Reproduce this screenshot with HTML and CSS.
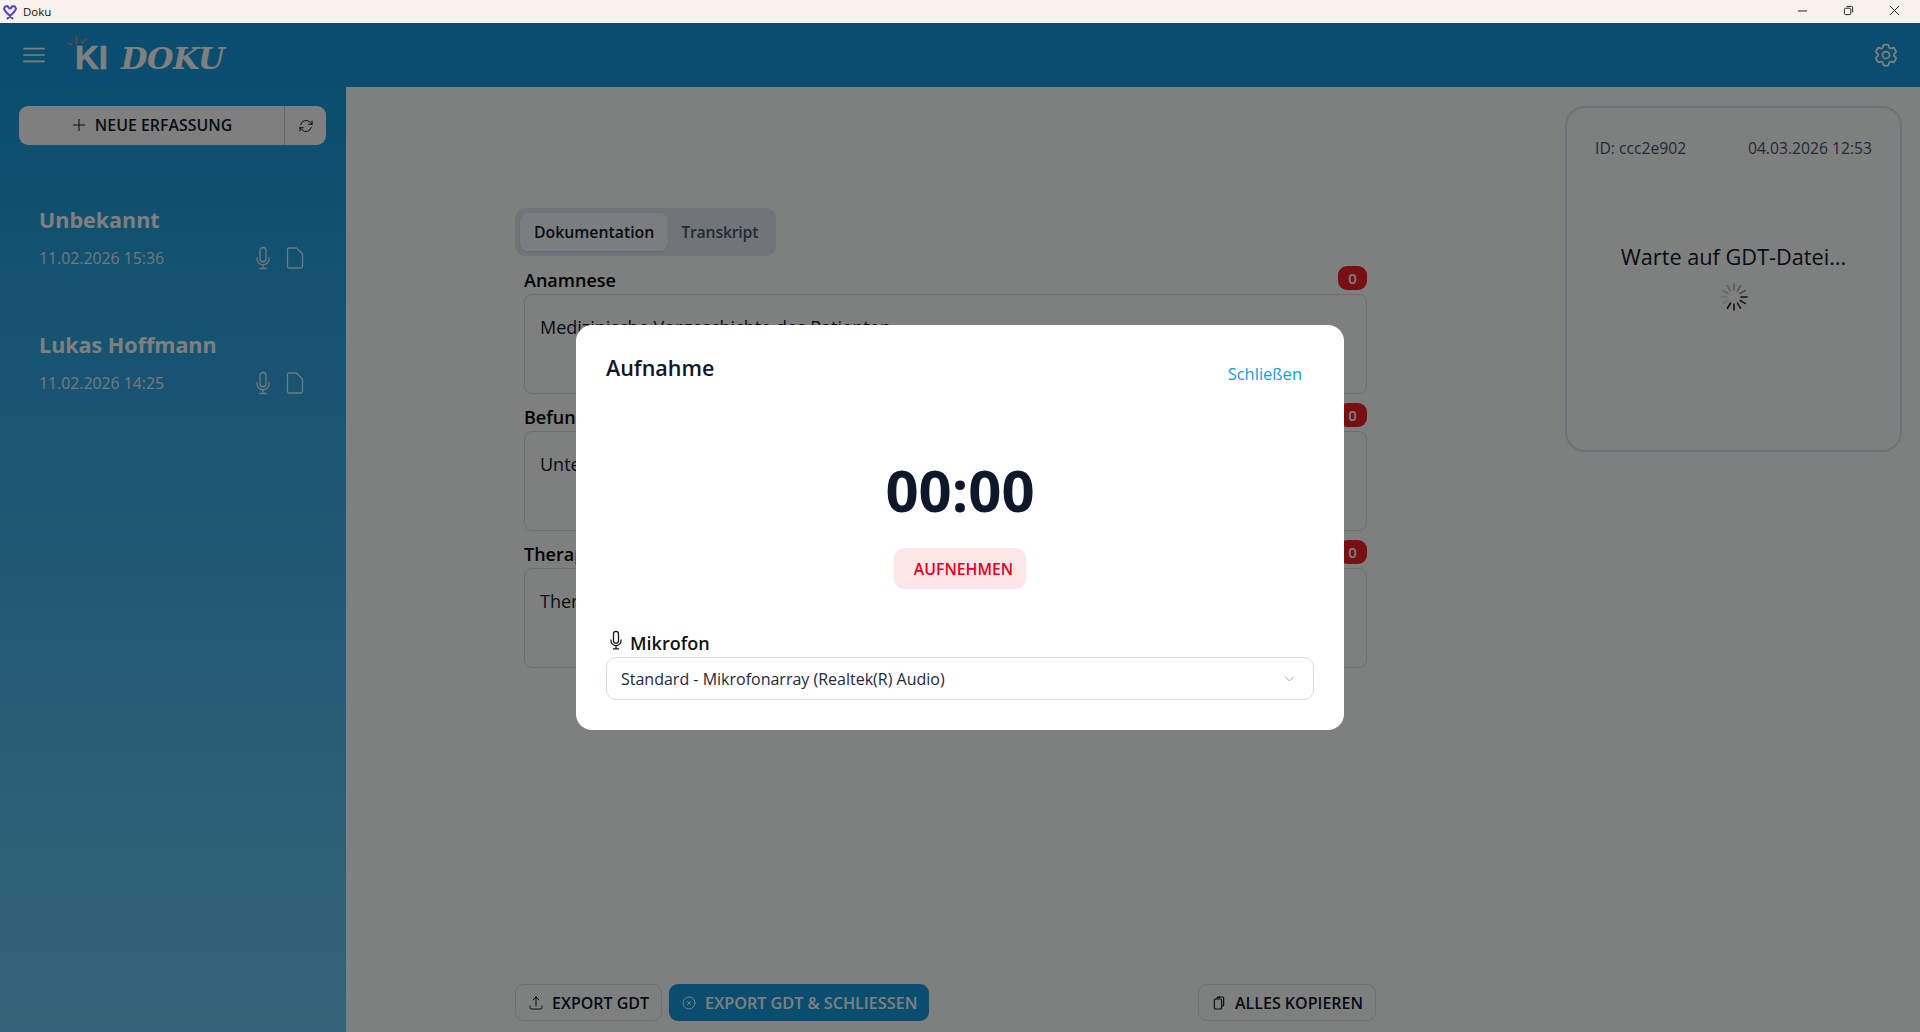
FILE: index.html
```html
<!DOCTYPE html>
<html lang="de">
<head>
  <meta charset="UTF-8">
  <title>Doku</title>
  <link rel="stylesheet" href="styles.css">
</head>
<body>

  <div class="titlebar">
    <svg class="app-icon" viewBox="0 0 14 16" fill="none" stroke="#5b3fd0" stroke-width="2"><path d="M7 5 4.500 2 2 2.500 1 5l2 3 7 7M7 5l2.500-3 2.500.5 1 2.500-2 3-7 7"/></svg>
    <span class="app-name">Doku</span>
    <div class="window-controls">
      <svg viewBox="0 0 12 12" fill="none" stroke="#111" stroke-width="1"><path d="M1 6.500h10"/></svg>
      <svg viewBox="0 0 12 12" fill="none" stroke="#111" stroke-width="1"><rect x="1.500" y="3.500" width="7" height="7" rx="1.500"/><path d="M4 1.500h5a1.500 1.500 0 0 1 1.500 1.500v5"/></svg>
      <svg viewBox="0 0 12 12" fill="none" stroke="#111" stroke-width="1"><path d="m1 1 10 10M11 1 1 11"/></svg>
    </div>
  </div>

  <header class="topbar">
    <svg class="menu-icon" viewBox="0 0 24 24" fill="none" stroke="currentColor" stroke-width="1.800" stroke-linecap="round"><path d="M1 5h22M1 12h22M1 19h22"/></svg>
    <div class="logo">
      <svg class="logo-rays" viewBox="0 0 22 12" fill="none" stroke="#ff7a7a" stroke-width="1.500" stroke-linecap="round"><path d="M9.500 1v7M2 7l3 2M19 3l-4 4"/></svg>
      <span class="logo-ki">KI</span>
      <span class="logo-doku">DOKU</span>
    </div>
    <svg class="gear-icon" viewBox="0 0 24 24" fill="none" stroke="currentColor" stroke-width="1.500"><path d="M9.594 3.940c.09-.542.56-.94 1.110-.94h2.593c.55 0 1.020.398 1.110.94l.213 1.281c.063.374.313.686.645.870.074.040.147.083.22.127.325.196.72.257 1.075.124l1.217-.456a1.125 1.125 0 0 1 1.370.49l1.296 2.247a1.125 1.125 0 0 1-.26 1.431l-1.003.827c-.293.241-.438.613-.43.992a7.723 7.723 0 0 1 0 .255c-.008.378.137.75.43.991l1.004.827c.424.35.534.955.26 1.430l-1.298 2.247a1.125 1.125 0 0 1-1.369.491l-1.217-.456c-.355-.133-.75-.072-1.076.124a6.470 6.470 0 0 1-.22.128c-.331.183-.581.495-.644.869l-.213 1.281c-.09.543-.56.94-1.110.94h-2.594c-.55 0-1.019-.398-1.110-.94l-.213-1.281c-.062-.374-.312-.686-.644-.87a6.520 6.520 0 0 1-.22-.127c-.325-.196-.72-.257-1.076-.124l-1.217.456a1.125 1.125 0 0 1-1.369-.49l-1.297-2.247a1.125 1.125 0 0 1 .26-1.431l1.004-.827c.292-.24.437-.613.43-.991a6.932 6.932 0 0 1 0-.255c.007-.38-.138-.751-.43-.992l-1.004-.827a1.125 1.125 0 0 1-.26-1.430l1.297-2.247a1.125 1.125 0 0 1 1.370-.491l1.216.456c.356.133.751.072 1.076-.124.072-.044.146-.086.22-.128.332-.183.582-.495.644-.869l.214-1.280Z"/><path d="M15 12a3 3 0 1 1-6 0 3 3 0 0 1 6 0Z"/></svg>
  </header>

  <div class="layout">
    <aside class="sidebar">
      <div class="new-entry">
        <button class="new-entry-main">
          <svg class="icon-16" viewBox="0 0 24 24" fill="none" stroke="currentColor" stroke-width="1.500"><path d="M12 3v18M3 12h18"/></svg>
          NEUE ERFASSUNG
        </button>
        <button class="new-entry-sync">
          <svg class="icon-16" viewBox="0 0 24 24" fill="none" stroke="currentColor" stroke-width="1.500" stroke-linecap="round" stroke-linejoin="round"><path d="M16.023 9.348h4.992M2.985 19.644v-4.992m0 0h4.992m-4.993 0 3.181 3.183a8.250 8.250 0 0 0 13.803-3.700M4.031 9.865a8.250 8.250 0 0 1 13.803-3.700l3.181 3.182m0-4.991v4.990"/></svg>
        </button>
      </div>

      <div class="patient">
        <div class="patient-name">Unbekannt</div>
        <div class="patient-row">
          <span class="patient-date">11.02.2026 15:36</span>
          <svg class="patient-icon" viewBox="0 0 24 24" fill="none" stroke="currentColor" stroke-width="1.300"><path d="M12 18.750a6 6 0 0 0 6-6v-1.500m-6 7.500a6 6 0 0 1-6-6v-1.500m6 7.500v3.750m-3.750 0h7.500M12 15.750a3 3 0 0 1-3-3V4.500a3 3 0 1 1 6 0v8.250a3 3 0 0 1-3 3Z"/></svg>
          <svg class="patient-icon" viewBox="0 0 24 24" fill="none" stroke="currentColor" stroke-width="1.300" stroke-linejoin="round"><path d="M13.500 2H6a1.500 1.500 0 0 0-1.500 1.500v17A1.500 1.500 0 0 0 6 22h12a1.500 1.500 0 0 0 1.500-1.500V8Z"/></svg>
        </div>
      </div>

      <div class="patient">
        <div class="patient-name">Lukas Hoffmann</div>
        <div class="patient-row">
          <span class="patient-date">11.02.2026 14:25</span>
          <svg class="patient-icon" viewBox="0 0 24 24" fill="none" stroke="currentColor" stroke-width="1.300"><path d="M12 18.750a6 6 0 0 0 6-6v-1.500m-6 7.500a6 6 0 0 1-6-6v-1.500m6 7.500v3.750m-3.750 0h7.500M12 15.750a3 3 0 0 1-3-3V4.500a3 3 0 1 1 6 0v8.250a3 3 0 0 1-3 3Z"/></svg>
          <svg class="patient-icon" viewBox="0 0 24 24" fill="none" stroke="currentColor" stroke-width="1.300" stroke-linejoin="round"><path d="M13.500 2H6a1.500 1.500 0 0 0-1.500 1.500v17A1.500 1.500 0 0 0 6 22h12a1.500 1.500 0 0 0 1.500-1.500V8Z"/></svg>
        </div>
      </div>
    </aside>

    <main class="content">
      <section class="editor">
        <div class="tabs">
          <div class="tab tab-active">Dokumentation</div>
          <div class="tab">Transkript</div>
        </div>

        <div class="field">
          <div class="field-head"><span>Anamnese</span><span class="badge">0</span></div>
          <div class="field-box">Medizinische Vorgeschichte des Patienten</div>
        </div>
        <div class="field">
          <div class="field-head"><span>Befund</span><span class="badge">0</span></div>
          <div class="field-box">Untersuchungsbefunde</div>
        </div>
        <div class="field">
          <div class="field-head"><span>Therapie</span><span class="badge">0</span></div>
          <div class="field-box">Therapieempfehlung</div>
        </div>

        <div class="actions">
          <button class="btn btn-outline">
            <svg class="icon-16" viewBox="0 0 24 24" fill="none" stroke="currentColor" stroke-width="1.500" stroke-linecap="round" stroke-linejoin="round"><path d="M3 16.500v2.250A2.250 2.250 0 0 0 5.250 21h13.500A2.250 2.250 0 0 0 21 18.750V16.500m-13.500-9L12 3m0 0 4.500 4.500M12 3v13.500"/></svg>
            EXPORT GDT
          </button>
          <button class="btn btn-primary">
            <svg class="icon-16" viewBox="0 0 24 24" fill="none" stroke="currentColor" stroke-width="1.500" stroke-linecap="round"><path d="m9.750 9.750 4.500 4.500m0-4.500-4.500 4.500M21 12a9 9 0 1 1-18 0 9 9 0 0 1 18 0Z"/></svg>
            EXPORT GDT &amp; SCHLIESSEN
          </button>
          <button class="btn btn-outline btn-copy">
            <svg class="icon-16" viewBox="0 0 24 24" fill="none" stroke="currentColor" stroke-width="1.700" stroke-linejoin="round"><path d="M9 6V4.500A1.500 1.500 0 0 1 10.500 3h7A1.500 1.500 0 0 1 19 4.500V15a1.500 1.500 0 0 1-1.500 1.500H16"/><rect x="5" y="6" width="11" height="15" rx="1.500"/><path d="M9 3.500h5"/></svg>
            ALLES KOPIEREN
          </button>
        </div>
      </section>

      <section class="gdt-card">
        <div class="gdt-meta"><span>ID: ccc2e902</span><span>04.03.2026 12:53</span></div>
        <div class="gdt-wait">Warte auf GDT-Datei...</div>
        <svg class="spinner" viewBox="-14 -14 28 28" stroke="#111" stroke-width="1.600" stroke-linecap="round">
          <line y1="-13" y2="-7" opacity=".3"/>
          <line y1="-13" y2="-7" opacity=".35" transform="rotate(30)"/>
          <line y1="-13" y2="-7" opacity=".45" transform="rotate(60)"/>
          <line y1="-13" y2="-7" opacity=".95" transform="rotate(90)"/>
          <line y1="-13" y2="-7" opacity=".85" transform="rotate(120)"/>
          <line y1="-13" y2="-7" opacity=".8" transform="rotate(150)"/>
          <line y1="-13" y2="-7" opacity=".9" transform="rotate(180)"/>
          <line y1="-13" y2="-7" opacity="1" transform="rotate(210)"/>
          <line y1="-13" y2="-7" opacity=".15" transform="rotate(240)"/>
          <line y1="-13" y2="-7" opacity=".15" transform="rotate(270)"/>
          <line y1="-13" y2="-7" opacity=".2" transform="rotate(300)"/>
          <line y1="-13" y2="-7" opacity=".25" transform="rotate(330)"/>
        </svg>
      </section>
    </main>
  </div>

  <div class="overlay">
    <div class="modal">
      <div class="modal-head">
        <h2>Aufnahme</h2>
        <button class="modal-close">Schließen</button>
      </div>
      <div class="timer">00:00</div>
      <button class="record-btn">AUFNEHMEN</button>
      <label class="mic-label">
        <svg class="mic-label-icon" viewBox="0 0 24 24" fill="none" stroke="currentColor" stroke-width="1.500"><path d="M12 18.750a6 6 0 0 0 6-6v-1.500m-6 7.500a6 6 0 0 1-6-6v-1.500m6 7.500v3.750m-3.750 0h7.500M12 15.750a3 3 0 0 1-3-3V4.500a3 3 0 1 1 6 0v8.250a3 3 0 0 1-3 3Z"/></svg>
        Mikrofon
      </label>
      <div class="mic-select">
        <span>Standard - Mikrofonarray (Realtek(R) Audio)</span>
        <svg class="chevron" viewBox="0 0 24 24" fill="none" stroke="currentColor" stroke-width="1.500"><path d="m5 9 7 7 7-7"/></svg>
      </div>
    </div>
  </div>

</body>
</html>
```

FILE: styles.css
```css
:root {
  --primary: #169bdc;
  --text: #0f172a;
  --slate: #64748b;
  --border: #d6dee8;
}

* {
  box-sizing: border-box;
  margin: 0;
  padding: 0;
}

html, body {
  height: 100%;
  overflow: hidden;
}

body {
  font-family: 'Open Sans', 'Noto Sans', sans-serif;
  color: var(--text);
  background: #fff;
  display: flex;
  flex-direction: column;
  position: relative;
}

button {
  font-family: inherit;
  background: none;
  border: none;
  color: inherit;
}

.icon-16 {
  width: 16px;
  height: 16px;
  flex-shrink: 0;
}

/* window chrome */
.titlebar {
  height: 23px;
  flex-shrink: 0;
  background: #f9f1ec;
  display: flex;
  align-items: center;
  padding-left: 3px;
}

.app-icon {
  width: 14px;
  height: 16px;
}

.app-name {
  font-size: 11.500px;
  margin-left: 6px;
  color: #111;
}

.window-controls {
  margin-left: auto;
  display: flex;
  gap: 35px;
  padding-right: 20px;
  margin-top: -3px;
}

.window-controls svg {
  width: 11px;
  height: 11px;
}

/* top bar */
.topbar {
  height: 64px;
  flex-shrink: 0;
  background: var(--primary);
  color: #fff;
  display: flex;
  align-items: center;
  padding: 0 20px 0 23px;
}

.menu-icon {
  width: 22px;
  height: 22px;
}

.logo {
  position: relative;
  display: flex;
  align-items: baseline;
  margin-left: 30px;
  margin-top: 5px;
}

.logo-rays {
  position: absolute;
  left: -8px;
  top: -3px;
  width: 22px;
  height: 12px;
}

.logo-ki {
  font-family: 'Liberation Sans', sans-serif;
  font-weight: 700;
  font-size: 33px;
  -webkit-text-stroke: 0.500px #fff;
}

.logo-doku {
  font-family: 'DejaVu Serif', serif;
  font-style: italic;
  font-weight: 700;
  font-size: 30.500px;
  margin-left: 13px;
  letter-spacing: -0.500px;
}

.gear-icon {
  width: 28px;
  height: 28px;
  margin-left: auto;
}

/* sidebar */
.layout {
  flex: 1;
  display: flex;
  min-height: 0;
}

.sidebar {
  width: 346px;
  flex-shrink: 0;
  background: linear-gradient(180deg, #169bdc, #6cc9f4);
  padding: 19px 20px 0 19px;
  color: #fff;
}

.new-entry {
  display: flex;
  height: 39px;
  background: #fff;
  border-radius: 9px;
  color: var(--text);
}

.new-entry-main {
  flex: 1;
  display: flex;
  align-items: center;
  justify-content: center;
  gap: 8px;
  font-size: 15.900px;
  font-weight: 600;
  padding-bottom: 2px;
  border-right: 1px solid #c3ccd8;
}

.new-entry-sync {
  width: 41px;
  display: flex;
  align-items: center;
  justify-content: center;
}

.patient {
  padding: 0 20px;
  margin-top: 60px;
}

.patient + .patient {
  margin-top: 60px;
}

.patient-name {
  font-size: 21.500px;
  font-weight: 700;
  line-height: 30px;
  white-space: nowrap;
}

.patient-row {
  display: flex;
  align-items: center;
  margin-top: 11px;
}

.patient-date {
  font-size: 15.800px;
  flex: 1;
  opacity: .85;
}

.patient-icon {
  width: 24px;
  height: 24px;
  opacity: .85;
  margin-left: 8px;
}

.patient-row .patient-icon:last-child {
  margin-right: -1px;
}

/* main area */
.content {
  flex: 1;
  display: flex;
  background: #fdfffe;
  min-width: 0;
}

.editor {
  width: 861px;
  margin-left: 169px;
  padding-top: 121px;
  padding-bottom: 11px;
  display: flex;
  flex-direction: column;
}

.tabs {
  align-self: flex-start;
  display: flex;
  padding: 5px;
  background: #e2e8f0;
  border-radius: 10px;
  font-size: 15.800px;
  font-weight: 600;
  margin-bottom: 10px;
}

.tab {
  height: 38px;
  line-height: 38px;
  padding: 0 14px;
  color: #475569;
  border-radius: 8px;
}

.tab + .tab {
  padding: 0 13px;
  letter-spacing: -0.200px;
}

.tab-active {
  background: #f8fafc;
  color: var(--text);
  box-shadow: 0 1px 2px rgba(0, 0, 0, .1);
}

.field {
  width: 843px;
  margin-left: 9px;
  margin-bottom: 9px;
}

.field-head {
  height: 28px;
  display: flex;
  align-items: center;
  justify-content: space-between;
  font-size: 18px;
  font-weight: 600;
  color: #000;
}

.badge {
  width: 29px;
  height: 24px;
  line-height: 24px;
  margin-top: -4px;
  text-align: center;
  border-radius: 9px;
  background: #f11e25;
  color: #fff;
  font-size: 15px;
  font-weight: 600;
}

.field-box {
  height: 100px;
  border: 1px solid var(--border);
  border-radius: 8px;
  padding: 20px 15px;
  font-size: 18px;
}

.actions {
  margin-top: auto;
  display: flex;
  gap: 7px;
}

.btn {
  height: 37px;
  border-radius: 9px;
  padding: 0 12px;
  display: flex;
  align-items: center;
  gap: 8px;
  font-size: 16px;
  font-weight: 600;
  color: var(--text);
}

.btn-outline {
  border: 1px solid var(--border);
}

.btn-primary {
  background: var(--primary);
  color: #fff;
  font-size: 16.200px;
}

.btn-copy {
  margin-left: auto;
}

.gdt-card {
  width: 337px;
  height: 346px;
  margin: 19px 18px 0 auto;
  border: 2px solid #dfe5ec;
  border-radius: 20px;
  display: flex;
  flex-direction: column;
  align-items: center;
  padding: 29px 28px;
}

.gdt-meta {
  width: 100%;
  display: flex;
  justify-content: space-between;
  font-size: 15.700px;
  color: #475569;
}

.gdt-wait {
  font-size: 21.700px;
  margin-top: 83px;
}

.spinner {
  width: 28px;
  height: 28px;
  margin-top: 12px;
}

/* recording dialog */
.overlay {
  position: absolute;
  inset: 23px 0 0 0;
  background: rgba(0, 0, 0, .5);
  display: flex;
  align-items: center;
  justify-content: center;
}

.modal {
  width: 768px;
  height: 405px;
  background: #fff;
  border-radius: 16px;
  padding: 25px 30px 30px;
  display: flex;
  flex-direction: column;
}

.modal-head {
  display: flex;
  justify-content: space-between;
  align-items: center;
}

.modal-head h2 {
  font-size: 21.500px;
  font-weight: 600;
  color: var(--text);
}

.modal-close {
  font-size: 16.500px;
  color: var(--primary);
  padding: 12px 12px 0;
}

.timer {
  text-align: center;
  font-size: 58px;
  font-weight: 700;
  line-height: 70px;
  margin-top: 70px;
}

.record-btn {
  align-self: center;
  width: 132px;
  height: 41px;
  margin-top: 23px;
  background: #fde6e7;
  color: #e8001c;
  border-radius: 10px;
  font-size: 15.800px;
  font-weight: 600;
  padding-left: 7px;
}

.mic-label {
  display: flex;
  align-items: center;
  gap: 4px;
  font-size: 18px;
  font-weight: 600;
  color: #111;
  margin-top: auto;
  height: 26px;
  padding-top: 2px;
}

.mic-label-icon {
  width: 20px;
  height: 20px;
  margin-top: -6px;
}

.mic-select {
  height: 43px;
  margin-top: 2px;
  border: 1.500px solid var(--border);
  border-radius: 10px;
  display: flex;
  align-items: center;
  justify-content: space-between;
  padding: 0 16px 0 14px;
  font-size: 16px;
  color: #1e293b;
}

.chevron {
  width: 15px;
  height: 15px;
  color: #94a3b8;
}
```
